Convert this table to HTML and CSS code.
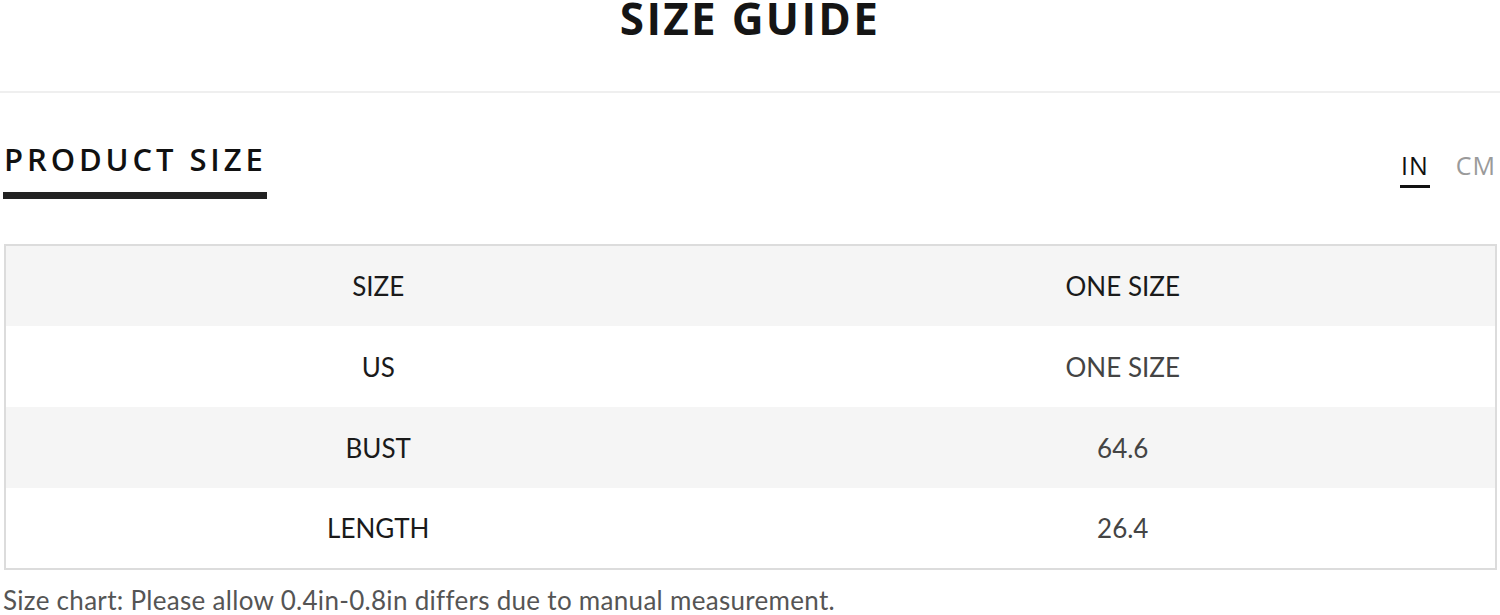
FILE: index.html
```html
<!DOCTYPE html>
<html>
<head>
<meta charset="utf-8">
<link rel="stylesheet" href="styles.css">
</head>
<body>
<div class="page">
  <header class="top">
    <h1 class="title">SIZE GUIDE</h1>
  </header>
  <div class="section-head">
    <div class="tab">PRODUCT SIZE</div>
    <div class="units">
      <span class="unit active">IN</span>
      <span class="unit">CM</span>
    </div>
  </div>
  <table class="chart">
    <tr class="shade"><td class="key">SIZE</td><td class="key">ONE SIZE</td></tr>
    <tr><td class="key">US</td><td class="val">ONE SIZE</td></tr>
    <tr class="shade"><td class="key">BUST</td><td class="val">64.6</td></tr>
    <tr><td class="key">LENGTH</td><td class="val">26.4</td></tr>
  </table>
  <p class="note">Size chart: Please allow 0.4in-0.8in differs due to manual measurement.</p>
</div>
</body>
</html>
```

FILE: styles.css
```css
* { box-sizing: border-box; }
html, body { margin: 0; padding: 0; background: #fff; }
body { font-family: "Lato", "Open Sans", sans-serif; color: #1a1a1a; overflow: hidden; }
.page { width: 1500px; height: 615px; }
.top {
  height: 93px;
  border-bottom: 2px solid #efefef;
  display: flex;
  justify-content: center;
}
.title {
  margin: 0;
  font-family: "Open Sans", sans-serif;
  font-weight: 700;
  font-size: 44px;
  line-height: 40px;
  letter-spacing: 2.3px;
  color: #151515;
  margin-top: -2px;
  height: 40px;
}
.section-head {
  display: flex;
  justify-content: space-between;
  align-items: flex-start;
  padding: 0 4px 0 3px;
  margin-top: 50px;
  height: 101px;
}
.tab {
  font-family: "Open Sans", sans-serif;
  font-weight: 600;
  font-size: 31px;
  line-height: 32px;
  letter-spacing: 3.9px;
  padding: 0 0 17px 1px;
  border-bottom: 7px solid #222;
  color: #111;
}
.units {
  display: flex;
  gap: 26px;
  margin-top: 8px;
  font-family: "Open Sans", sans-serif;
  font-size: 25px;
  line-height: 28px;
  letter-spacing: 1px;
}
.unit { color: #9a9a9a; padding-bottom: 4px; }
.unit.active { color: #111; border-bottom: 3px solid #111; padding: 0 1px 6px; }
.chart {
  margin: 0 3px 0 4px;
  width: 1493px;
  border-collapse: collapse;
  border: 2px solid #dcdcdc;
  table-layout: fixed;
}
.chart td {
  height: 81px;
  text-align: center;
  font-size: 26px;
  padding: 0;
  width: 50%;
}
.chart tr.shade td { background: #f5f5f5; }
.key { color: #1a1a1a; }
.val { color: #444; }
.note {
  margin: 15px 0 0 3px;
  font-size: 26px;
  letter-spacing: 0.3px;
  color: #555;
  line-height: 30px;
}
```
